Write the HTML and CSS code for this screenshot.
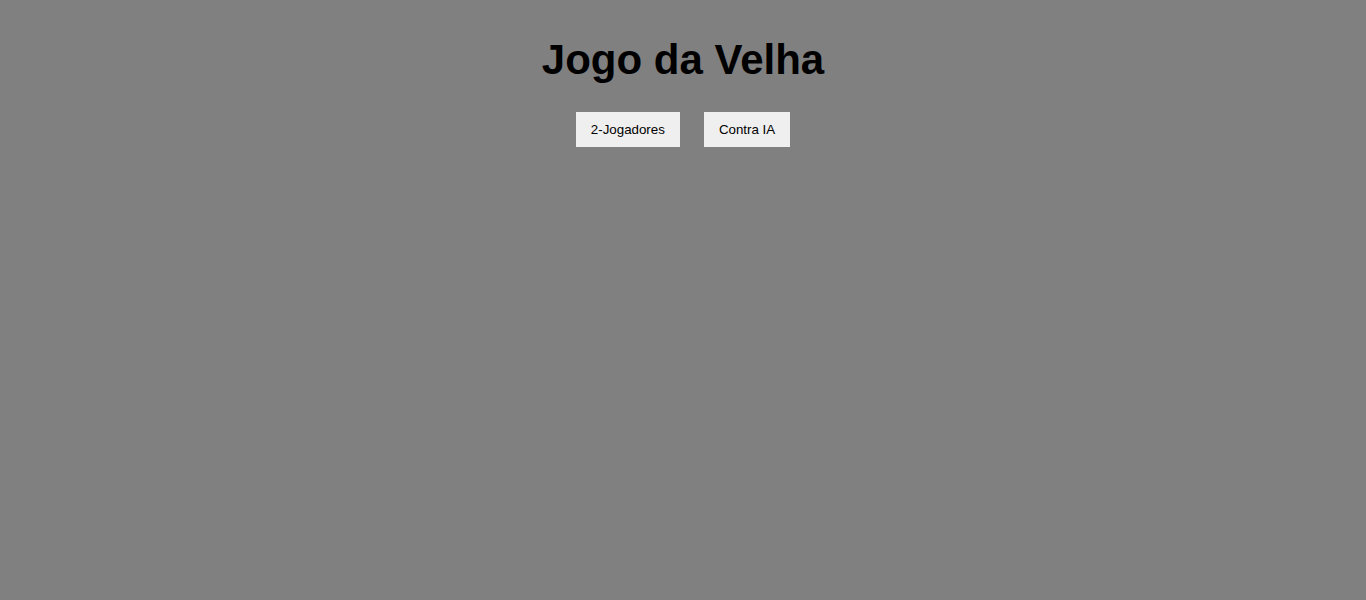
FILE: index.html
```html
<!DOCTYPE html>
<html lang="pt">
<head>
<meta charset="utf-8">
<title>Jogo da Velha</title>
<link rel="stylesheet" href="styles.css">
</head>
<body>
<main class="app">
  <h1 class="title">Jogo da Velha</h1>
  <div class="modes">
    <button class="mode-btn">2-Jogadores</button>
    <button class="mode-btn">Contra IA</button>
  </div>
</main>
</body>
</html>
```

FILE: styles.css
```css
html, body {
  margin: 0;
  padding: 0;
  background: #808080;
  height: 100%;
}
body {
  font-family: "Liberation Sans", Arial, sans-serif;
}
.app {
  display: flex;
  flex-direction: column;
  align-items: center;
  padding-top: 36px;
}
.title {
  margin: 0;
  font-size: 42px;
  font-weight: bold;
  color: #000;
  line-height: 48px;
}
.modes {
  display: flex;
  gap: 24px;
  margin-top: 28px;
}
.mode-btn {
  font-family: "Liberation Sans", Arial, sans-serif;
  font-size: 13.333px;
  background: #efefef;
  color: #000;
  border: none;
  padding: 0 15px;
  height: 35px;
  cursor: pointer;
}
```
